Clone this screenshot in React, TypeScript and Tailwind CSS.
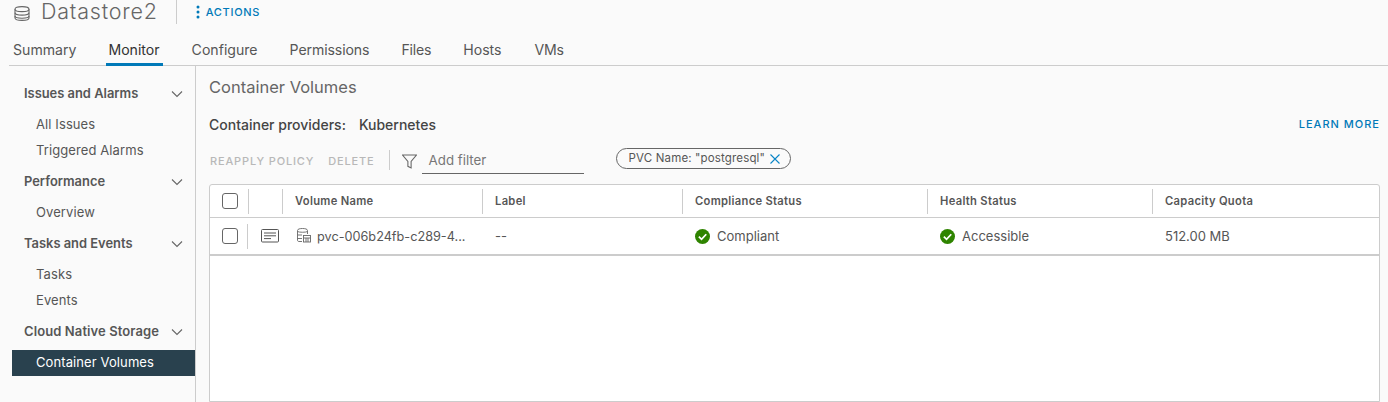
import React from "react";

function Chevron() {
  return (
    <svg width="14" height="14" viewBox="0 0 14 14" fill="none" stroke="#666" strokeWidth="1.1" className="shrink-0">
      <path d="M2 4.5 L7 9.5 L12 4.5" />
    </svg>
  );
}

function Check() {
  return (
    <svg width="15" height="15" viewBox="0 0 14 14" className="shrink-0">
      <circle cx="7" cy="7" r="7" fill="#2f8400" />
      <path d="M3.6 7.2 L6.1 9.6 L10.5 4.9" fill="none" stroke="#fff" strokeWidth="1.7" />
    </svg>
  );
}

function Box() {
  return <div className="w-4 h-4 rounded-[3px] border border-[#666] bg-white shrink-0" />;
}

function Group({ title, items }: { title: string; items: string[] }) {
  return (
    <div>
      <div className="h-[36px] flex items-center justify-between pl-[12px] pr-[11px] font-semibold text-[#565656] text-[12.9px]">
        <span>{title}</span>
        <Chevron />
      </div>
      {items.map((i) => (
        <div key={i} className="h-[26px] flex items-center pl-[24px] text-[13px] tracking-[0.1px] text-[#565656]">
          {i}
        </div>
      ))}
    </div>
  );
}

const tabs = [
  { t: "Summary", c: "text-[#565656]" },
  { t: "Monitor", c: "text-[#333] px-[2px] pr-[3px] ml-[-2px] mr-[-3px] border-b-[3px] border-[#0079b8]" },
  { t: "Configure", c: "text-[#565656]" },
  { t: "Permissions", c: "text-[#565656] tracking-[-0.1px]" },
  { t: "Files", c: "text-[#565656] tracking-[-0.2px]" },
  { t: "Hosts", c: "text-[#565656]" },
  { t: "VMs", c: "text-[#565656] tracking-[-0.2px] ml-px" },
];

const cols = [
  { w: "w-[200px]", t: "Volume Name" },
  { w: "w-[200px]", t: "Label" },
  { w: "w-[245px]", t: "Compliance Status" },
  { w: "w-[225px]", t: "Health Status" },
  { w: "flex-1", t: "Capacity Quota" },
];

export default function App() {
  return (
    <div className="w-[1388px] h-[402px] overflow-hidden bg-[#fafafa] flex flex-col text-[#565656] font-['Inter','Liberation_Sans',sans-serif]">
      <div className="h-[24px] flex items-center pl-[14px] shrink-0">
        <svg width="16" height="15" viewBox="0 0 16 15" fill="none" stroke="#666" strokeWidth="1.1" className="shrink-0 mt-[3px]">
          <path d="M1 3.2 C1 1.4 3.5 0.6 8 0.6 C12.5 0.6 15 1.4 15 3.2 V12 C15 13.6 12.5 14.4 8 14.4 C3.5 14.4 1 13.6 1 12 Z" />
          <path d="M1 3.2 C1 5 3.5 5.6 8 5.6 C12.5 5.6 15 5 15 3.2" />
          <path d="M1 6.8 C1 8.4 3.5 9.1 8 9.1 C12.5 9.1 15 8.4 15 6.8" />
          <path d="M1 10 C1 11.6 3.5 12.2 8 12.2 C12.5 12.2 15 11.6 15 10" />
        </svg>
        <span className="ml-[11px] text-[21.5px] leading-[20px] tracking-[0.8px] text-[#666] font-light mt-[-2px]">Datastore2</span>
        <div className="w-px h-[25px] bg-[#ccc] ml-[18px] mt-[-1px]" />
        <svg width="4" height="14" viewBox="0 0 4 14" className="ml-[19px] shrink-0" fill="#0079b8">
          <circle cx="2" cy="2" r="1.5" />
          <circle cx="2" cy="7" r="1.5" />
          <circle cx="2" cy="12" r="1.5" />
        </svg>
        <span className="ml-[6px] text-[#0079b8] text-[11px] tracking-[0.7px] font-medium">ACTIONS</span>
      </div>

      <div className="h-[42px] shrink-0 ml-[9px] pl-[4px] gap-[32px] border-b border-[#ccc] flex items-end">
        {tabs.map((t) => (
          <div key={t.t} className={`h-[26px] mb-[-1px] text-[14.1px] flex items-start leading-[20px] ${t.c}`}>
            {t.t}
          </div>
        ))}
      </div>

      <div className="flex flex-1 min-h-0">
        <div className="w-[196px] shrink-0 pt-[10px] pl-[12px] border-r border-[#ccc] flex flex-col">
          <Group title="Issues and Alarms" items={["All Issues", "Triggered Alarms"]} />
          <Group title="Performance" items={["Overview"]} />
          <Group title="Tasks and Events" items={["Tasks", "Events"]} />
          <div className="h-[36px] flex items-center justify-between pl-[12px] pr-[11px] font-semibold text-[#565656] text-[13px] tracking-[0.1px]">
            <span>Cloud Native Storage</span>
            <Chevron />
          </div>
          <div className="h-[26px] flex items-center pl-[24px] text-[13px] tracking-[0.1px] text-white bg-[#29414e]">Container Volumes</div>
        </div>

        <div className="flex-1 min-w-0 pl-[13px] pr-[8px] pt-[11px] flex flex-col">
          <div className="text-[16.5px] leading-[20px] text-[#666]">Container Volumes</div>
          <div className="flex items-center justify-between mt-[17px] h-[20px]">
            <div className="text-[14px] text-[#444] font-medium flex gap-[13px]">
              <span>Container providers:</span>
              <span>Kubernetes</span>
            </div>
            <span className="text-[#0079b8] text-[11px] tracking-[1px] font-medium">LEARN MORE</span>
          </div>
          <div className="flex items-center h-[22px] mt-[16px]">
            <span className="ml-px text-[11px] tracking-[0.85px] text-[#b8b8b8] font-medium">REAPPLY POLICY</span>
            <span className="ml-[14px] text-[11px] tracking-[0.85px] text-[#b8b8b8] font-medium">DELETE</span>
            <div className="w-px h-[20px] bg-[#ccc] ml-[14px] mt-[-2px]" />
            <svg width="15" height="15" viewBox="0 0 14 14" fill="none" stroke="#666" strokeWidth="1" className="ml-[12px] shrink-0">
              <path d="M0.5 1 H13.5 L8.5 7 V13 L5.5 11.5 V7 Z" />
            </svg>
            <div className="ml-[5px] w-[162px] h-[24px] self-start pb-[1px] border-b border-[#666] pl-[7px] text-[13.3px] text-[#777] flex items-center">
              Add filter
            </div>
            <div className="ml-[32px] mt-[-5px] h-[21px] w-[175px] rounded-full border border-[#666] flex items-center pl-[12px] text-[11.5px] text-[#565656] tracking-[0.15px] whitespace-nowrap">
              <span>PVC Name: "postgresql"</span>
              <svg width="10" height="10" viewBox="0 0 10 10" stroke="#0a85c7" strokeWidth="1.1" className="ml-[5px] shrink-0">
                <path d="M0.5 0.5 L9.5 9.5 M9.5 0.5 L0.5 9.5" />
              </svg>
            </div>
          </div>

          <div className="mt-[12px] flex-1 bg-white border border-[#ccc] rounded-t-[3px]">
            <div className="h-[33px] flex items-center border-b border-[#ccc]">
              <div className="w-[39px] h-[25px] flex items-center pl-[12px] border-r border-[#ccc]">
                <Box />
              </div>
              <div className="w-[34px] h-[25px] border-r border-[#ccc]" />
              {cols.map((c, i) => (
                <div
                  key={c.t}
                  className={`${c.w} h-[25px] flex items-center pl-[12px] text-[11.2px] font-semibold tracking-[0.3px] text-[#565656] ${i < 4 ? "border-r border-[#ccc]" : ""}`}
                >
                  {c.t}
                </div>
              ))}
            </div>
            <div className="h-[38px] flex items-center border-b-[2px] border-[#ccc] text-[13px] text-[#565656]">
              <div className="w-[38px] h-[25px] flex items-center pl-[12px] border-r border-[#ccc]">
                <Box />
              </div>
              <div className="w-[35px] flex pl-[13px]">
                <svg width="18" height="14" viewBox="0 0 18 14" fill="none" stroke="#555" strokeWidth="1">
                  <rect x="0.5" y="0.5" width="17" height="12.5" rx="1" />
                  <path d="M3 4 H15 M3 6.8 H15 M3 9.6 H10" />
                </svg>
              </div>
              <div className="w-[200px] flex items-center pl-[14px] gap-[6px]">
                <svg width="14" height="15" viewBox="0 0 14 15" fill="none" stroke="#666" strokeWidth="0.9" className="shrink-0">
                  <path d="M5 13.5 H2 C1 13.5 0.5 13 0.5 12 V2.5 C0.5 1 3 0.5 5.5 0.5 C8 0.5 10.5 1 10.5 2.5 V6" />
                  <path d="M0.5 3.5 C2 4.5 9 4.5 10.5 3.5 M0.5 7 H5 M0.5 10.5 H5" />
                  <rect x="6.5" y="7.5" width="7" height="6.5" />
                  <path d="M6.5 10 H13.5 M9 10 V14 M11 10 V14" />
                </svg>
                <span className="text-[12.7px] whitespace-nowrap mt-px">pvc-006b24fb-c289-4...</span>
              </div>
              <div className="w-[200px] pl-[12px] pt-px">--</div>
              <div className="w-[245px] pl-[12px] flex items-center gap-[7px]">
                <Check />
                <span className="mt-px">Compliant</span>
              </div>
              <div className="w-[225px] pl-[12px] flex items-center gap-[7px]">
                <Check />
                <span className="mt-px">Accessible</span>
              </div>
              <div className="flex-1 pl-[12px] pt-px">512.00 MB</div>
            </div>
          </div>
        </div>
      </div>
    </div>
  );
}
